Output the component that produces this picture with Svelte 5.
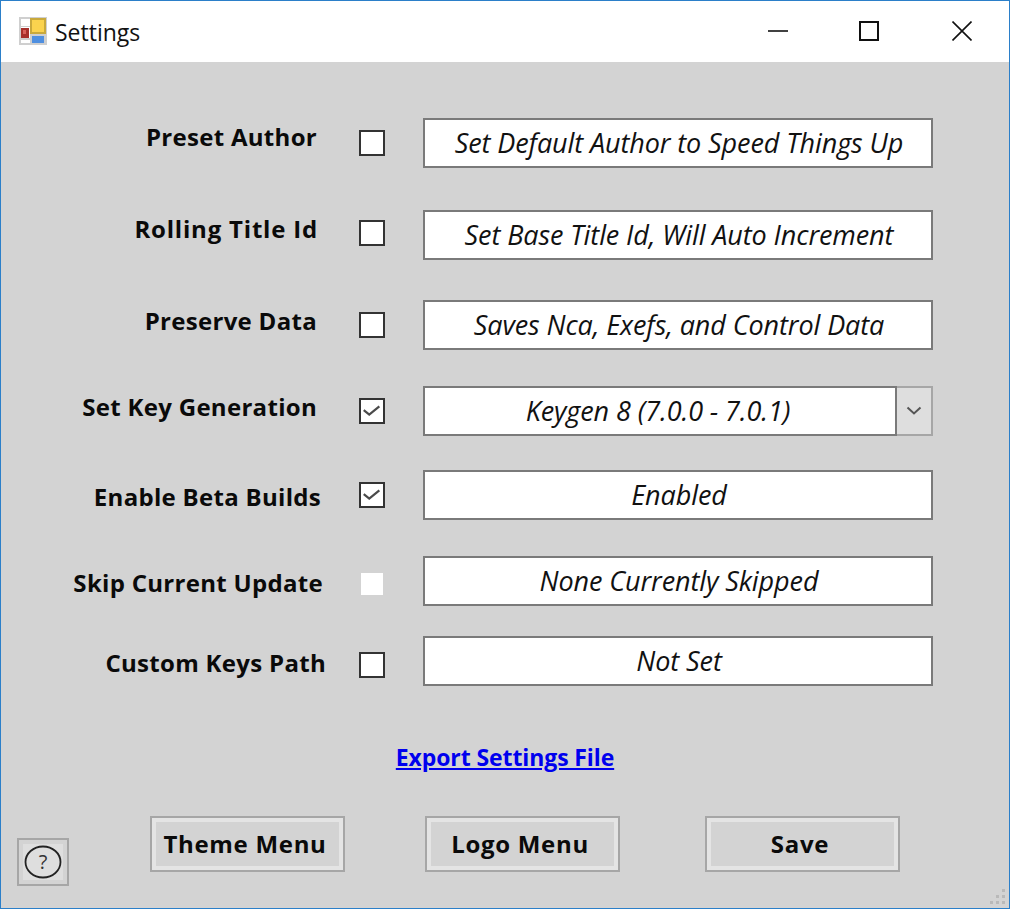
<script>
  const rows = [
    { label: "Preset Author", gap: 0, right: 42, shift: -14, boxShift: 0, value: "Set Default Author to Speed Things Up" },
    { label: "Rolling Title Id", gap: 42, right: 41, shift: -14, boxShift: -2, value: "Set Base Title Id, Will Auto Increment", wide: true },
    { label: "Preserve Data", gap: 40, right: 42, shift: -10, boxShift: 0, value: "Saves Nca, Exefs, and Control Data" },
    { label: "Set Key Generation", gap: 36, right: 42, shift: -10, boxShift: 0, value: "Keygen 8 (7.0.0 - 7.0.1)", checked: true, select: true },
    { label: "Enable Beta Builds", gap: 34, right: 38, shift: 2, boxShift: 0, value: "Enabled", checked: true },
    { label: "Skip Current Update", gap: 36, right: 36, shift: 2, boxShift: 3, value: "None Currently Skipped", disabled: true },
    { label: "Custom Keys Path", gap: 30, right: 33, shift: 2, boxShift: 4, value: "Not Set" },
  ];
  const buttons = ["Theme Menu", "Logo Menu", "Save"];
</script>

<div class="window">
  <header class="titlebar">
    <svg class="app-icon" viewBox="0 0 28 28" aria-hidden="true">
      <rect width="28" height="28" fill="#cfcfcf" />
      <rect x="2" y="2" width="9" height="7" fill="#fff" />
      <rect x="2" y="10" width="9" height="11" fill="#fff" />
      <rect x="2" y="11" width="8" height="10" fill="#a8302c" />
      <rect x="4" y="13" width="3" height="4" fill="#d9605a" />
      <rect x="11" y="1" width="16" height="16" fill="#c9a93c" />
      <rect x="13" y="3" width="12" height="12" fill="#fbd34e" />
      <rect x="2" y="23" width="9" height="3" fill="#fff" />
      <rect x="13" y="19" width="12" height="7" fill="#4f8fe0" />
    </svg>
    <span class="title">Settings</span>
    <div class="controls">
      <svg viewBox="0 0 20 20" width="20" height="20" aria-hidden="true"><path d="M0 10h20" stroke="#111" stroke-width="1.6" /></svg>
      <svg viewBox="0 0 20 20" width="20" height="20" aria-hidden="true"><rect x="1" y="1" width="18" height="18" fill="none" stroke="#111" stroke-width="2" /></svg>
      <svg viewBox="0 0 20 20" width="20" height="20" aria-hidden="true"><path d="M.5.5l19 19M19.500.5l-19 19" stroke="#111" stroke-width="1.6" /></svg>
    </div>
  </header>

  <main class="content">
    <div class="form">
      {#each rows as row}
        <div class="row" style="margin-top:{row.gap}px">
          <span class="label" class:wide={row.wide} style="padding-right:{row.right}px;margin-top:{row.shift}px">{row.label}</span>
          <span class="check" class:disabled={row.disabled} style="margin-top:{row.boxShift * 2}px">
            {#if row.checked}
              <svg viewBox="0 0 24 24" width="22" height="22" aria-hidden="true"><path d="M3 11l6 5L20 7" fill="none" stroke="#4a4a4a" stroke-width="2.4" /></svg>
            {/if}
          </span>
          <div class="field" class:has-select={row.select}>
            <div class="input">{row.value}</div>
            {#if row.select}
              <div class="arrow">
                <svg viewBox="0 0 16 10" width="16" height="10" aria-hidden="true"><path d="M1.500 1.500L8 7.500l6.500-6" fill="none" stroke="#555" stroke-width="2" /></svg>
              </div>
            {/if}
          </div>
        </div>
      {/each}
    </div>

    <a class="export" href="#export">Export Settings File</a>

    <div class="footer">
      <button class="help" aria-label="Help">
        <span class="help-inner">
          <svg viewBox="0 0 38 36" width="38" height="36" aria-hidden="true">
            <ellipse cx="19" cy="18" rx="17.500" ry="15.500" fill="none" stroke="#222" stroke-width="1.800" />
            <text x="19" y="25" text-anchor="middle" font-size="20" fill="#333">?</text>
          </svg>
        </span>
      </button>
      <div class="actions">
        {#each buttons as b}
          <button class="btn"><span>{b}</span></button>
        {/each}
      </div>
    </div>

    <svg class="grip" viewBox="0 0 16 16" width="16" height="16" aria-hidden="true">
      <g fill="#b9b9b9">
        <rect x="12" y="0" width="3" height="3" />
        <rect x="6" y="6" width="3" height="3" /><rect x="12" y="6" width="3" height="3" />
        <rect x="0" y="12" width="3" height="3" /><rect x="6" y="12" width="3" height="3" /><rect x="12" y="12" width="3" height="3" />
      </g>
    </svg>
  </main>
</div>

<style>
  :global(body) {
    margin: 0;
    font-family: "Open Sans", "Noto Sans", sans-serif;
  }

  .window {
    position: relative;
    box-sizing: border-box;
    width: 1010px;
    height: 909px;
    display: flex;
    flex-direction: column;
    border: 1px solid #2b7fc9;
    background: #d3d3d3;
    color: #000;
  }

  .titlebar {
    display: flex;
    align-items: center;
    flex: 0 0 61px;
    padding-left: 18px;
    background: #fff;
  }

  .app-icon {
    width: 28px;
    height: 28px;
    margin-top: -1px;
  }

  .title {
    margin-left: 8px;
    font-size: 23px;
    color: #111;
  }

  .controls {
    display: flex;
    gap: 73px;
    margin-left: auto;
    margin-right: 37px;
    margin-top: -2px;
  }

  .controls svg:first-child { margin-right: -2px; }

  .content {
    position: relative;
    flex: 1;
    display: flex;
    flex-direction: column;
    padding-top: 56px;
  }

  .row {
    display: flex;
    align-items: center;
    height: 50px;
  }

  .label {
    box-sizing: border-box;
    width: 358px;
    text-align: right;
    font-size: 24px;
    font-weight: 700;
    white-space: nowrap;
    letter-spacing: 0.3px;
    color: #0a0a0a;
  }

  .label.wide { letter-spacing: 0.8px; }

  .check {
    box-sizing: border-box;
    flex: none;
    width: 26px;
    height: 26px;
    display: grid;
    place-items: center;
    border: 2px solid #333;
    background: #fff;
  }

  .check.disabled {
    border-color: #d3d3d3;
    background: #fff;
  }

  .field {
    display: flex;
    width: 510px;
    margin-left: 38px;
  }

  .input {
    box-sizing: border-box;
    flex: 1;
    height: 50px;
    padding-bottom: 2px;
    padding-left: 2px;
    display: flex;
    align-items: center;
    justify-content: center;
    border: 2px solid #7a7a7a;
    background: #fff;
    font-size: 27px;
    font-style: italic;
    letter-spacing: -0.1px;
    white-space: nowrap;
    color: #111;
  }

  .has-select .input {
    flex: 0 0 474px;
    padding-left: 0;
    padding-right: 4px;
  }

  .arrow {
    box-sizing: border-box;
    flex: 1;
    display: grid;
    place-items: center;
    border: 2px solid #a6a6a6;
    border-left: 0;
    background: #dedede;
  }

  .export {
    align-self: center;
    margin-top: 57px;
    font-size: 23px;
    font-weight: 700;
    line-height: 28px;
    color: #0000ee;
    letter-spacing: -0.1px;
  }

  .footer {
    display: flex;
    align-items: flex-end;
    margin-top: 45px;
    padding-left: 16px;
  }

  button {
    font: inherit;
    padding: 0;
    cursor: pointer;
  }

  .help {
    box-sizing: border-box;
    width: 52px;
    height: 48px;
    display: grid;
    place-items: center;
    border: 2px solid #a6a6a6;
    background: #d3d3d3;
  }

  .help-inner {
    display: grid;
    place-items: center;
    width: 40px;
    height: 36px;
    background: #dedede;
  }

  .help text { font-family: "Open Sans", sans-serif; }

  .actions {
    display: flex;
    gap: 80px;
    margin-left: 81px;
    margin-bottom: 14px;
  }

  .actions .btn:last-child { margin-left: 5px; }

  .btn {
    box-sizing: border-box;
    width: 195px;
    height: 56px;
    padding: 4px;
    border: 2px solid #a6a6a6;
    background: #e4e4e4;
    font-size: 24px;
    font-weight: 700;
    letter-spacing: 0.7px;
    color: #0a0a0a;
  }

  .btn span {
    display: grid;
    place-items: center;
    box-sizing: border-box;
    height: 100%;
    padding: 0 5px 2px 0;
    background: #d3d3d3;
  }

  .grip {
    position: absolute;
    right: 3px;
    bottom: 3px;
  }
</style>
